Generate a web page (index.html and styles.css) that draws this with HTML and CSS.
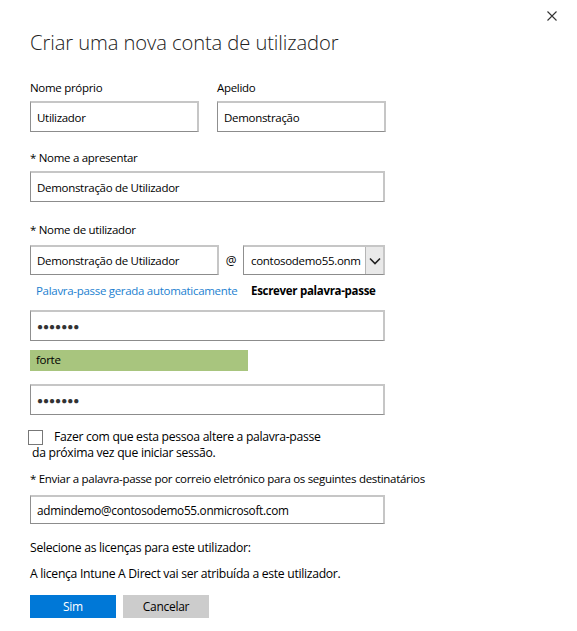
FILE: index.html
```html
<!DOCTYPE html>
<html lang="pt">
<head>
<meta charset="utf-8">
<title>Criar uma nova conta de utilizador</title>
<link rel="stylesheet" href="styles.css">
</head>
<body>
<div class="dialog">
  <div class="topbar">
    <button class="close" aria-label="Fechar">
      <svg width="10" height="10" viewBox="0 0 10 10"><path d="M0.5 0.5 L9.5 9.5 M9.5 0.5 L0.5 9.5" stroke="#333" stroke-width="1.1" fill="none"/></svg>
    </button>
  </div>
  <h1 class="title">Criar uma nova conta de utilizador</h1>

  <div class="pair">
    <div class="field half">
      <label class="label">Nome próprio</label>
      <div class="input">Utilizador</div>
    </div>
    <div class="field half">
      <label class="label">Apelido</label>
      <div class="input">Demonstração</div>
    </div>
  </div>

  <div class="field gap-a">
    <label class="label">* Nome a apresentar</label>
    <div class="input">Demonstração de Utilizador</div>
  </div>

  <div class="field gap-b">
    <label class="label">* Nome de utilizador</label>
    <div class="userrow">
      <div class="input user">Demonstração de Utilizador</div>
      <span class="at">@</span>
      <div class="select">
        <span class="select-text">contosodemo55.onm</span>
        <span class="select-btn">
          <svg width="12" height="8" viewBox="0 0 12 8"><path d="M1 1.5 L6 6.5 L11 1.5" stroke="#222" stroke-width="1.6" fill="none"/></svg>
        </span>
      </div>
    </div>
  </div>

  <div class="links">
    <a class="link-auto" href="#">Palavra-passe gerada automaticamente</a>
    <span class="link-manual">Escrever palavra-passe</span>
  </div>

  <div class="input pwd">&#9679;&#9679;&#9679;&#9679;&#9679;&#9679;&#9679;</div>
  <div class="strength">forte</div>
  <div class="input pwd confirm">&#9679;&#9679;&#9679;&#9679;&#9679;&#9679;&#9679;</div>

  <div class="check">
    <div class="check-line"><span class="box"></span><span>Fazer com que esta pessoa altere a palavra-passe</span></div>
    <div class="check-line2">da próxima vez que iniciar sessão.</div>
  </div>

  <div class="field gap-c">
    <label class="label nowrap">* Enviar a palavra-passe por correio eletrónico para os seguintes destinatários</label>
    <div class="input email">admindemo@contosodemo55.onmicrosoft.com</div>
  </div>

  <p class="text t1">Selecione as licenças para este utilizador:</p>
  <p class="text t2">A licença Intune A Direct vai ser atribuída a este utilizador.</p>

  <div class="buttons">
    <button class="btn primary">Sim</button>
    <button class="btn secondary">Cancelar</button>
  </div>
</div>
</body>
</html>
```

FILE: styles.css
```css
* { box-sizing: border-box; }
html, body { margin: 0; padding: 0; background: #fff; }
body {
  font-family: "Open Sans", "Noto Sans", sans-serif;
  font-size: 11.5px;
  letter-spacing: -0.3px;
  color: #000;
}
.dialog {
  width: 577px;
  padding: 0 30px;
}
.topbar {
  height: 27px;
  display: flex;
  justify-content: flex-end;
  align-items: flex-start;
  margin-right: -10px;
}
.close {
  background: none;
  border: 0;
  padding: 0;
  margin-top: 11px;
  width: 10px;
  height: 10px;
  display: flex;
}
.title {
  margin: 0;
  font-weight: 300;
  font-size: 20.2px;
  line-height: 30px;
  color: #222;
  letter-spacing: -0.1px;
}
.pair {
  display: flex;
  gap: 18px;
  margin-top: 23px;
  width: 355px;
}
.half { width: 168px; }
.field { display: flex; flex-direction: column; width: 355px; }
.label { line-height: 16px; height: 16px; margin-bottom: 5px; }
.nowrap { white-space: nowrap; }
.input {
  height: 31px;
  border-style: solid;
  border-color: #c6c6c6 #c6c6c6 #8c8c8c #8f8f8f;
  border-width: 2px 2px 1px 1px;
  padding: 0 6px;
  display: flex;
  align-items: center;
  white-space: nowrap;
  overflow: hidden;
}
.half .input { width: 169px; }
.gap-a { margin-top: 18px; }
.gap-b { margin-top: 20px; }
.userrow { display: flex; align-items: center; margin-top: 2px; }
.input.user { width: 189px; height: 30px; }
.at { width: 24px; text-align: center; font-size: 12px; }
.select {
  width: 142px;
  height: 30px;
  display: flex;
  border-style: solid;
  border-color: #c6c6c6 #c6c6c6 #8c8c8c #8f8f8f;
  border-width: 2px 2px 1px 1px;
  overflow: hidden;
}
.select-text {
  flex: 1;
  padding-left: 7px;
  display: flex;
  align-items: center;
  white-space: nowrap;
  overflow: hidden;
}
.select-btn {
  width: 18px;
  flex: none;
  background: #e9e9e9;
  border-left: 1px solid #b5b5b5;
  display: flex;
  align-items: center;
  justify-content: center;
}
.links {
  display: flex;
  margin-top: 7px;
  line-height: 18px;
}
.link-auto {
  color: #1c7fd0;
  text-decoration: none;
  margin-left: 6px;
  width: 215px;
  flex: none;
}
.link-manual { font-weight: 700; }
.input.pwd {
  width: 355px;
  margin-top: 10px;
  font-size: 10px;
  letter-spacing: 0px;
  color: #333;
}
.strength {
  width: 218px;
  height: 21px;
  margin-top: 9px;
  background: #a8c57e;
  padding-left: 6px;
  line-height: 19px;
}
.input.confirm { margin-top: 13px; }
.check { margin-top: 14px; line-height: 16px; font-size: 12.2px; }
.check-line { display: flex; align-items: center; }
.box {
  width: 15px;
  height: 15px;
  border: 1px solid #777;
  margin-left: -2px;
  margin-right: 11px;
}
.check-line2 { padding-left: 2px; }
.gap-c { margin-top: 10px; }
.input.email { margin-top: 3px; height: 29px; font-size: 11.8px; }
.text { margin: 0; line-height: 16px; font-size: 12.2px; }
.t1 { margin-top: 16px; }
.t2 { margin-top: 10px; }
.buttons { display: flex; gap: 7px; margin-top: 13px; }
.btn {
  width: 86px;
  height: 23px;
  border: 0;
  font-family: inherit;
  font-size: 12px;
  letter-spacing: -0.3px;
  padding: 0;
}
.primary { background: #0078d7; color: #fff; }
.secondary { background: #cccccc; color: #000; }
```
